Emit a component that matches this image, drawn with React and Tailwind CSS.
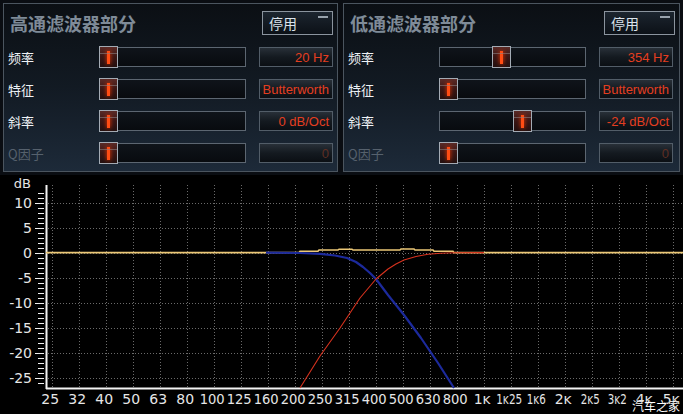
import React from "react";

const CJK = { fontFamily: '"Noto Sans CJK SC", "Noto Sans", sans-serif' };

function Thumb({ left }) {
  return (
    <div
      className="absolute top-[-2px] w-[19px] h-[22px] border border-[#a3abb4] bg-gradient-to-b from-[#5a2b27] via-[#3a1614] to-[#24100f] flex items-center justify-center"
      style={{ left }}
    >
      <div className="absolute left-0 right-0 top-[6px] h-px bg-[#8a7f80]/60" />
      <div className="w-[3px] h-[13px] bg-[#ff4d14] shadow-[0_0_4px_#ff3a00]" />
    </div>
  );
}

function Row({ label, dim, thumb, value, valueDim }) {
  return (
    <div className="flex items-center h-[20px]">
      <div
        className={`w-[95px] pl-[4px] text-[13px] leading-none ${dim ? "text-[#56616d]" : "text-[#eef2f6]"}`}
        style={CJK}
      >
        {label}
      </div>
      <div className="relative w-[147px] h-[20px] border border-[#5c6671] bg-gradient-to-b from-[#0f141a] to-[#080b0f]">
        <Thumb left={thumb} />
      </div>
      <div
        className="ml-[13px] w-[74px] h-[20px] border border-[#525d68] bg-gradient-to-b from-[#283038] via-[#141a20] to-[#0b0f14] flex items-center justify-end pr-[3px] text-[13px] leading-none"
        style={{ fontFamily: '"Liberation Sans", Arial, sans-serif' }}
      >
        <span className={valueDim ? "text-[#5e2e22]" : "text-[#e43e20]"}>{value}</span>
      </div>
    </div>
  );
}

function Panel({ title, width, rows }) {
  return (
    <div
      className="h-[169px] border border-[#4b555f] bg-gradient-to-b from-[#0b0f14] via-[#121a23] to-[#1d2a39] pt-[7px] pr-[4px]"
      style={{ width }}
    >
      <div className="flex items-center justify-between h-[24px]">
        <div className="pl-[6px] text-[18px] font-bold text-[#7f8b98] leading-none" style={CJK}>
          {title}
        </div>
        <div className="relative w-[71px] h-[24px] border border-[#8b949e] bg-gradient-to-b from-[#1c252f] to-[#0c1117] flex items-center pl-[6px]">
          <span className="text-[14px] text-[#dce4ec] leading-none" style={CJK}>停用</span>
          <div className="absolute top-[4px] right-[4px] w-[10px] h-[2px] bg-[#98a2ac]" />
        </div>
      </div>
      <div className="mt-[12px] flex flex-col gap-[12px]">
        {rows.map((r, i) => (
          <Row key={i} {...r} />
        ))}
      </div>
    </div>
  );
}

const xLabels = ["25","32","40","50","63","80","100","125","160","200","250","315","400","500","630","800","1ĸ","1ĸ25","1ĸ6","2ĸ","2ĸ5","3ĸ2","4ĸ","5ĸ"];
const gx = (i) => 51.7 + 27 * i;
const yOf = (db) => 253 - 5 * db;

function Chart() {
  const hLines = [10, 5, 0, -5, -10, -15, -20, -25];
  const minor = [];
  for (let d = 12; d >= -26; d--) minor.push(d);
  const blue = [
    [266, 252.6],[300, 253],[320, 253.8],[335, 255.5],[347, 258],[356, 262],[363, 267],[370, 273],[376, 279],[388, 295],[404, 315],[421, 338],[438, 363],[454, 388],
  ];
  const red = [
    [300, 388],[320, 356],[340, 328],[360, 298],[376, 279],[388, 269],[396, 264],[404, 260],[416, 256.5],[428, 254.2],[441, 253.2],[455, 252.7],[484, 252.6],
  ];
  const yellow = [
    [46, 252.6],[299, 252.6],[300, 251.2],[318, 251.2],[319, 250],[338, 250],[339, 249.2],[352, 249.2],[353, 250],[400, 250],[401, 249],[414, 249],[415, 250],[433, 250],[434, 251.2],[453, 251.2],[454, 252.6],[683, 252.6],
  ];
  const pts = (a) => a.map((p) => p.join(",")).join(" ");
  const lenFor = (l) => {
    if (l.length === 4) return 26;
    if (l.length === 3 && l.includes("ĸ")) return 19;
    if (l.length === 3) return 25;
    return null;
  };
  return (
    <svg width="683" height="239" viewBox="0 175 683 239" className="block bg-black">
      <g stroke="#6a6a6a" strokeWidth="1" strokeDasharray="1 2" shapeRendering="crispEdges">
        {hLines.map((d) => (
          <line key={d} x1="48" x2="683" y1={yOf(d) + 0.5} y2={yOf(d) + 0.5} />
        ))}
        {xLabels.map((_, i) => (
          <line key={i} x1={Math.round(gx(i)) + 0.5} x2={Math.round(gx(i)) + 0.5} y1="185" y2="387" />
        ))}
      </g>
      <g stroke="#f0f0f0" strokeWidth="1" shapeRendering="crispEdges">
        {minor.map((d) => (
          <line key={d} x1={d % 5 === 0 ? 35 : 38} x2="44" y1={yOf(d) + 0.5} y2={yOf(d) + 0.5} />
        ))}
      </g>
      <line x1="46.5" x2="46.5" y1="185" y2="389" stroke="#f4f4f4" strokeWidth="2" />
      <line x1="46" x2="683" y1="388.5" y2="388.5" stroke="#f4f4f4" strokeWidth="2" />
      <polyline points={pts(yellow)} fill="none" stroke="#ecc877" strokeWidth="1.6" />
      <polyline points={pts(blue)} fill="none" stroke="#1c2a9c" strokeWidth="2.2" strokeLinejoin="round" />
      <polyline points={pts(red)} fill="none" stroke="#d8321e" strokeWidth="1.1" strokeLinejoin="round" />
      <g fill="#e6e6e6" fontFamily='"DejaVu Sans", sans-serif' fontSize="14">
        <text x="31" y="188" textAnchor="end" fontSize="13">dB</text>
        {hLines.map((d) => (
          <text key={d} x="32" y={yOf(d) + 5} textAnchor="end">{d}</text>
        ))}
      </g>
      <g fill="#e6e6e6" fontFamily='"DejaVu Sans", sans-serif' fontSize="14">
        {xLabels.map((l, i) => {
          const len = lenFor(l);
          return len ? (
            <text key={i} x={gx(i) - 1.5} y="404" textAnchor="middle" textLength={len} lengthAdjust="spacingAndGlyphs">{l}</text>
          ) : (
            <text key={i} x={gx(i) - 1.5} y="404" textAnchor="middle">{l}</text>
          );
        })}
      </g>
      <text x="656" y="411" textAnchor="middle" fontSize="12" fill="#ffffff" stroke="#000" strokeWidth="0.6" paintOrder="stroke" fontFamily='"Noto Sans CJK SC", sans-serif'>汽车之家</text>
    </svg>
  );
}

export default function App() {
  const left = [
    { label: "频率", thumb: -1, value: "20 Hz" },
    { label: "特征", thumb: -1, value: "Butterworth" },
    { label: "斜率", thumb: -1, value: "0 dB/Oct" },
    { label: "Q因子", dim: true, thumb: -1, value: "0", valueDim: true },
  ];
  const right = [
    { label: "频率", thumb: 52, value: "354 Hz" },
    { label: "特征", thumb: -1, value: "Butterworth" },
    { label: "斜率", thumb: 73, value: "-24 dB/Oct" },
    { label: "Q因子", dim: true, thumb: -1, value: "0", valueDim: true },
  ];
  return (
    <div className="w-[683px] h-[414px] overflow-hidden bg-black">
      <div className="h-[175px] bg-[#0a0d12] flex gap-[5px] pt-[3px] pl-[3px]">
        <Panel title="高通滤波器部分" width={335} rows={left} />
        <Panel title="低通滤波器部分" width={337} rows={right} />
      </div>
      <Chart />
    </div>
  );
}
